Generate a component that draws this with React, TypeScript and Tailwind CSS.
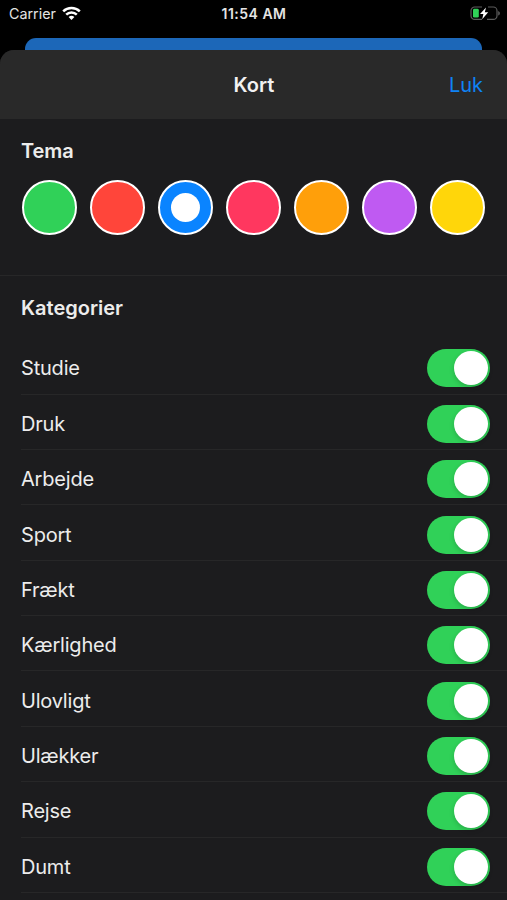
import { useState } from "react";
import clsx from "clsx";

const themes = [
  { id: "green", color: "bg-[#30d158]" },
  { id: "red", color: "bg-[#ff453a]" },
  { id: "blue", color: "bg-[#0a84ff]" },
  { id: "pink", color: "bg-[#ff375f]" },
  { id: "orange", color: "bg-[#ff9f0a]" },
  { id: "purple", color: "bg-[#bf5af2]" },
  { id: "yellow", color: "bg-[#ffd60a]" },
];

const categories = [
  "Studie",
  "Druk",
  "Arbejde",
  "Sport",
  "Frækt",
  "Kærlighed",
  "Ulovligt",
  "Ulækker",
  "Rejse",
  "Dumt",
];

function StatusBar() {
  return (
    <div className="grid h-[38px] grid-cols-3 items-start pt-1 pr-[6px] pl-[9px] text-[14px] leading-5 text-[#e4e4e4]">
      <div className="flex items-start gap-[6px]">
        <span className="text-[14.3px]">Carrier</span>
        <svg className="mt-[1.5px]" width="19" height="15" viewBox="0 0 19 15" fill="none" stroke="#fff" strokeWidth="2.5">
          <path d="M1.2 5.3a11.8 11.8 0 0 1 16.6 0" />
          <path d="M4.2 8.6a7.5 7.5 0 0 1 10.6 0" />
          <path d="M9.5 14 6.6 11.1a4.2 4.2 0 0 1 5.8 0Z" fill="#fff" stroke="none" />
        </svg>
      </div>
      <span className="-ml-[2px] text-center font-semibold tracking-[0.5px] whitespace-nowrap">11:54 AM</span>
      <svg className="mt-[2px] justify-self-end" width="31" height="15" viewBox="0 0 31 15" fill="none">
        <path d="M12 1H4.7A3.7 3.7 0 0 0 1 4.7v5A3.7 3.7 0 0 0 4.7 13.4H12M18 1h5.3A3.7 3.7 0 0 1 27 4.7v5a3.7 3.7 0 0 1-3.7 3.7H17" stroke="#5c5c5c" strokeWidth="1.2" />
        <path d="M28.2 5v4.6c1-.4 1.7-1.3 1.7-2.3s-.7-1.9-1.7-2.3Z" fill="#5c5c5c" />
        <rect x="3" y="2.8" width="5.8" height="8.8" rx="1.4" fill="#30d158" />
        <path d="M16 1.4 10 7.9h3.4l-1.2 5.3 6-6.9h-3.4l1.2-4.9Z" fill="#fff" />
      </svg>
    </div>
  );
}

function Toggle({ label, on, onChange }: { label: string; on: boolean; onChange: () => void }) {
  return (
    <button
      role="switch"
      aria-checked={on}
      aria-label={label}
      onClick={onChange}
      className={clsx(
        "flex h-[38px] w-[63px] items-center rounded-full px-[2.5px]",
        on ? "justify-end bg-[#30d158]" : "justify-start bg-[#39393d]",
      )}
    >
      <span className="size-[34px] rounded-full bg-white shadow-[0_2px_5px_rgba(0,0,0,0.18)]" />
    </button>
  );
}

export default function App() {
  const [theme, setTheme] = useState("blue");
  const [disabled, setDisabled] = useState<string[]>([]);

  const toggle = (name: string) =>
    setDisabled((prev) => (prev.includes(name) ? prev.filter((n) => n !== name) : [...prev, name]));

  return (
    <div className="flex h-[900px] w-[507px] flex-col overflow-hidden bg-black font-['Inter',sans-serif] text-[#ececec]">
      <StatusBar />

      {/* Card behind the sheet */}
      <div className="mx-[25px] h-3 shrink-0 rounded-t-[11px] bg-[#1c67b8]" />

      <main className="flex-1 overflow-hidden rounded-t-[14px] bg-[#1c1c1e]">
        <header className="grid h-[69px] grid-cols-3 items-center bg-[#292929] pr-[24px] pl-[25px] text-[20px]">
          <h1 className="col-start-2 text-center font-semibold text-[#f2f2f2]">Kort</h1>
          <button className="justify-self-end text-[#0f83f5]">Luk</button>
        </header>

        <section className="h-[157px] border-b border-[#272728] pt-[18px]">
          <h2 className="pl-[21px] text-[20px] leading-7 font-semibold tracking-[-0.1px]">Tema</h2>
          <div className="mt-[14.5px] flex gap-[13px] pl-[22px]">
            {themes.map((t) => (
              <button
                key={t.id}
                aria-label={t.id}
                onClick={() => setTheme(t.id)}
                className={clsx(
                  "flex size-[55px] shrink-0 items-center justify-center rounded-full border-[2.5px] border-white",
                  t.color,
                )}
              >
                {theme === t.id && <span className="size-[29px] rounded-full bg-white" />}
              </button>
            ))}
          </div>
        </section>

        <section>
          <h2 className="h-[63.3px] pt-[18px] pl-[21px] text-[20px] leading-7 font-semibold">Kategorier</h2>
          <ul className="pl-[21px]">
            {categories.map((name) => (
              <li
                key={name}
                className="flex h-[55.36px] items-center justify-between border-b border-[#272728] pt-[4px] pr-[17px] text-[20px] tracking-[-0.2px]"
              >
                <span>{name}</span>
                <Toggle label={name} on={!disabled.includes(name)} onChange={() => toggle(name)} />
              </li>
            ))}
          </ul>
        </section>
      </main>
    </div>
  );
}
